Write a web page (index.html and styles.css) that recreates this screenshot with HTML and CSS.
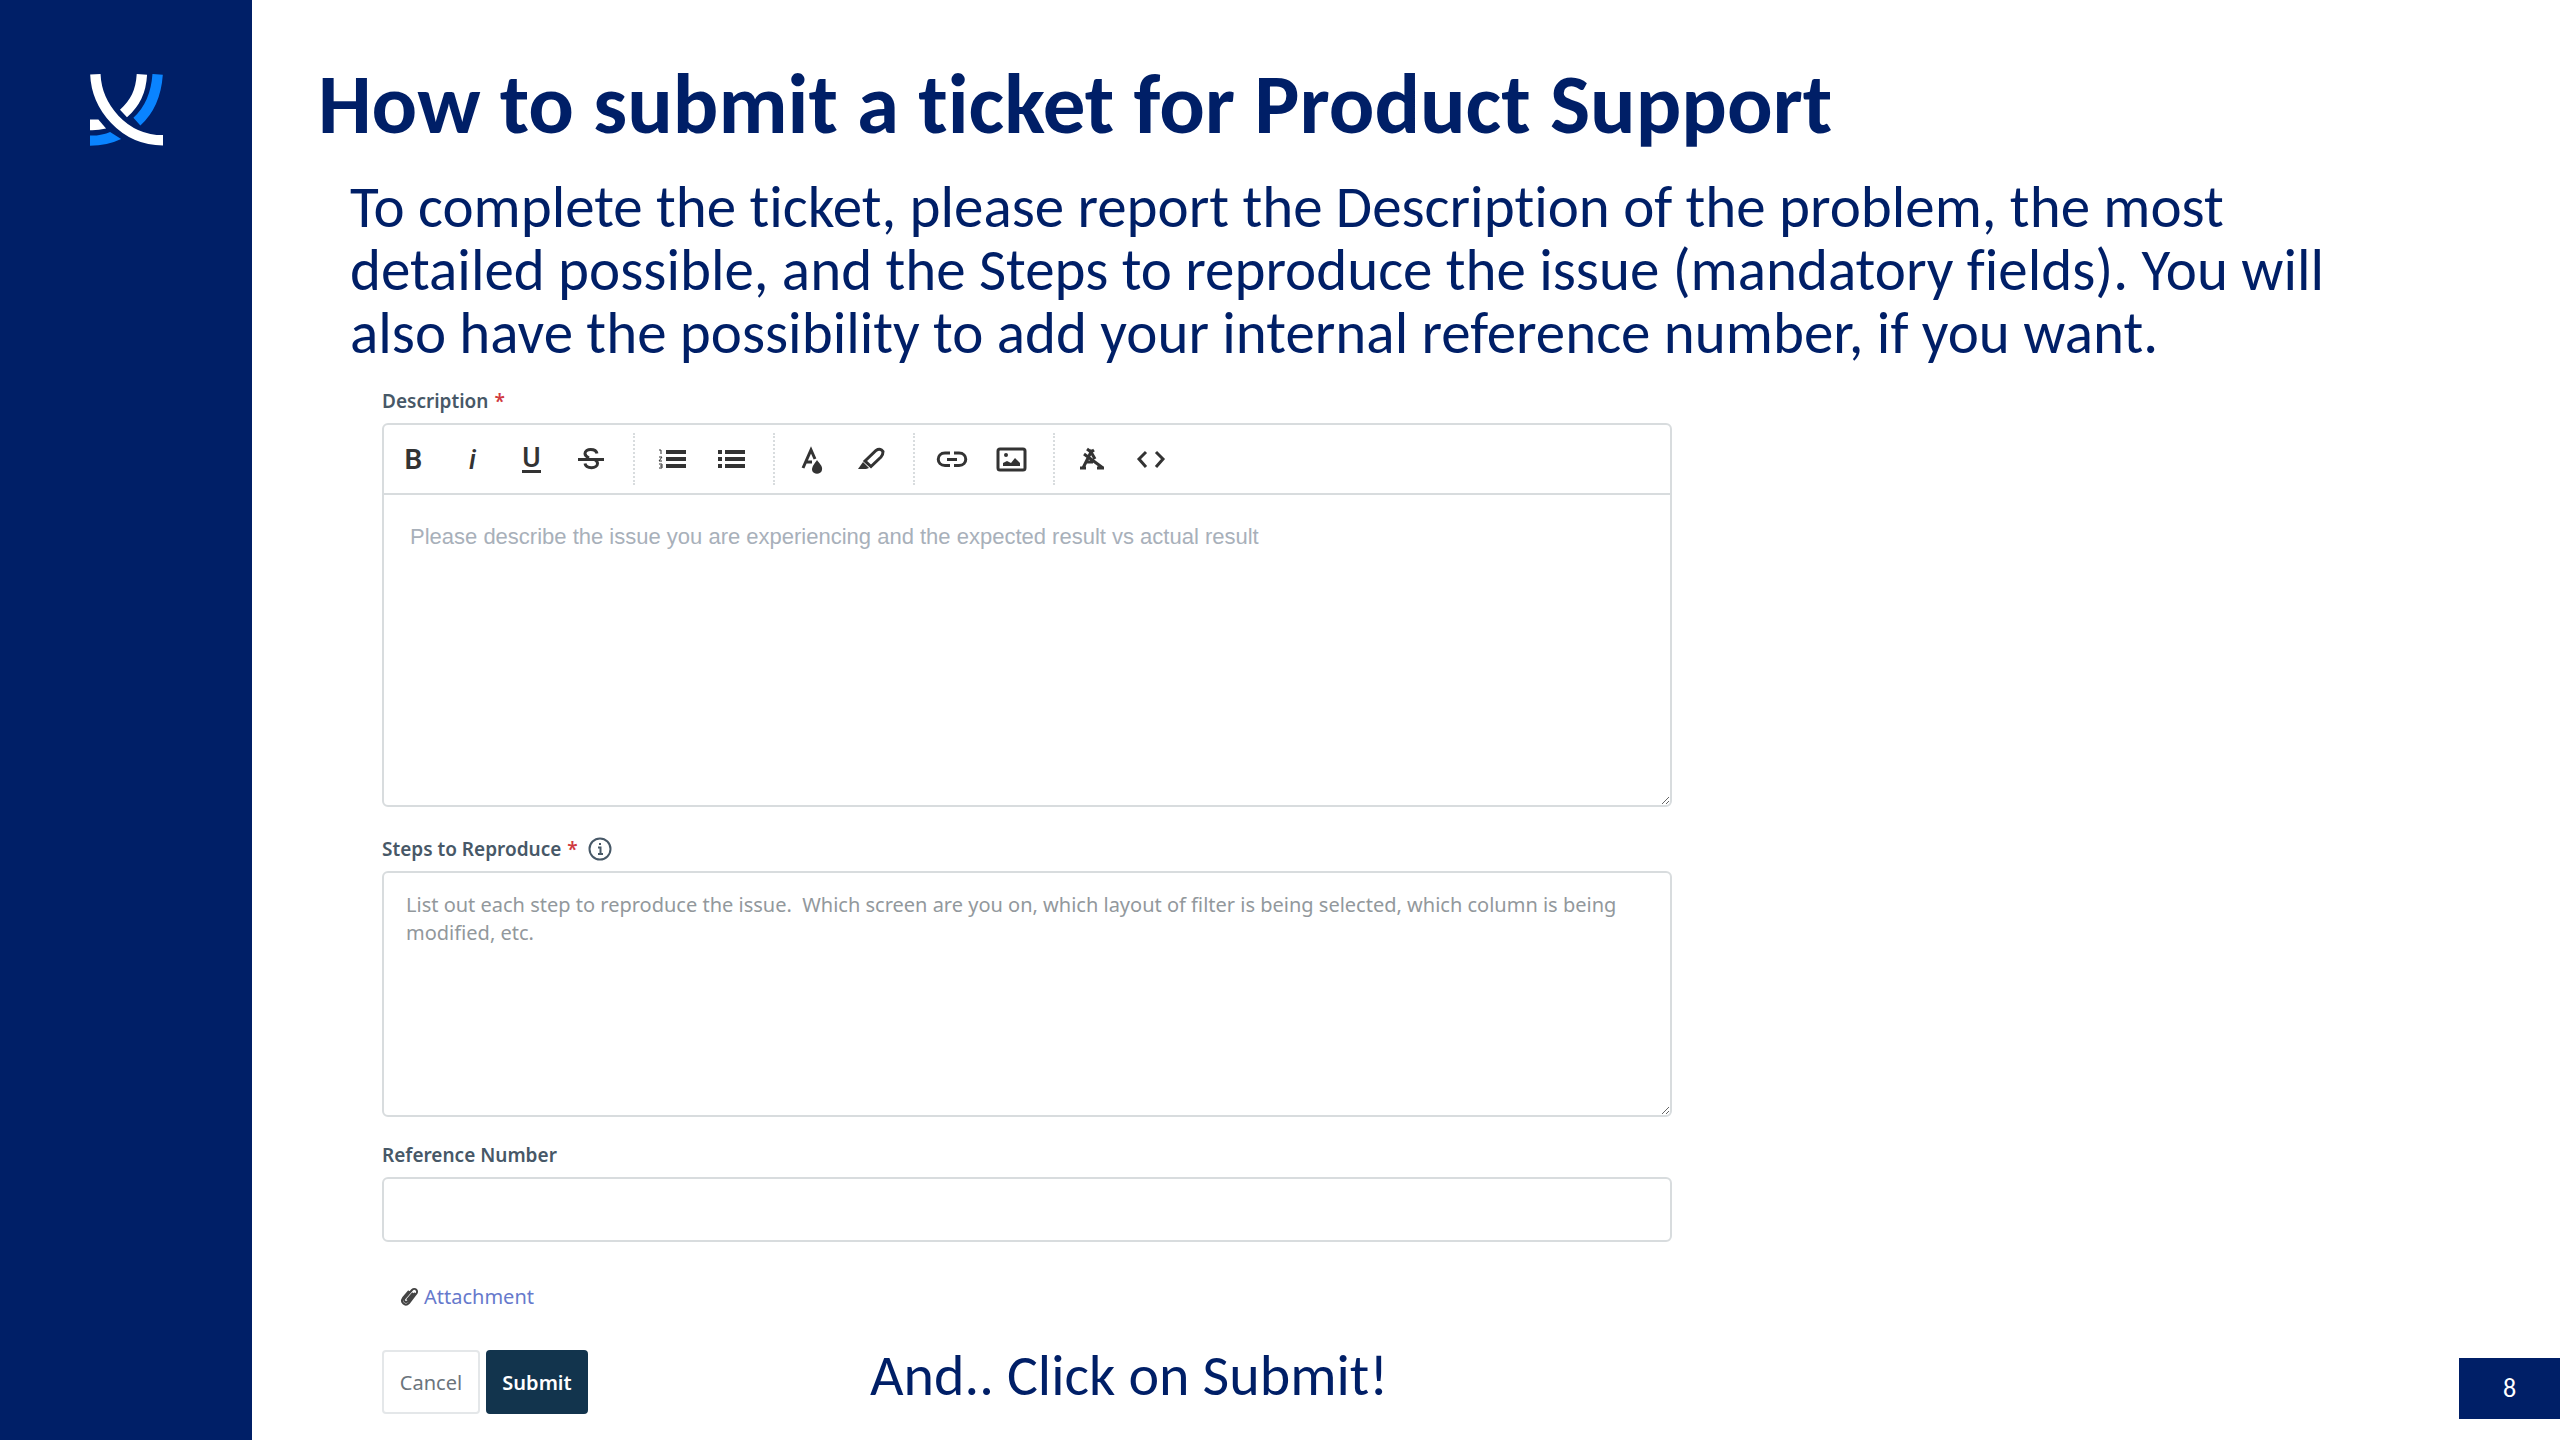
FILE: index.html
```html
<!doctype html>
<html lang="en">

<head>
    <meta charset="utf-8">
    <title>How to submit a ticket for Product Support</title>
    <link rel="stylesheet" href="styles.css">
</head>

<body>

<div class="slide">
    <aside class="sidebar">
        <svg class="logo" viewBox="90 73 218 213" fill="none" stroke-width="31">
            <path d="M245 73C242 125 225 158 190 190" stroke="#fff"/>
            <path d="M292 73C288 130 270 178 230 214" stroke="#0a84ff"/>
            <path d="M90 208H115L138 235Q112 241 90 240Z" fill="#fff" stroke="none"/>
            <path d="M90 256C120 256 135 251 150 245L183 266Q142 286 90 286Z" fill="#0a84ff" stroke="none"/>
            <path d="M106 73C110 170 190 270 308 270" stroke="#fff"/>
        </svg>
    </aside>

    <main class="content">
        <h1 class="title">How to submit a ticket for Product Support</h1>
        <p class="intro">To complete the ticket, please report the Description of the problem, the most<br>
            detailed possible, and the Steps to reproduce the issue (mandatory fields). You will<br>
            also have the possibility to add your internal reference number, if you want.</p>

        <form class="ticket">
            <label class="label" for="description">Description <span class="required">*</span></label>
            <div class="editor">
                <div class="toolbar">
                    <button class="tool" type="button" aria-label="Bold"><b class="tool-bold">B</b></button>
                    <button class="tool" type="button" aria-label="Italic"><i class="tool-italic">i</i></button>
                    <button class="tool" type="button" aria-label="Underline"><span class="tool-underline">U</span></button>
                    <button class="tool" type="button" aria-label="Strikethrough">
                        <svg class="icon" viewBox="0 0 36 36"><path d="M24 12.500C23 7 12 7 12 12.500C12 15 14 16 16 17M12 22.500C13 28 24.500 28 24.500 22.500C24.500 20.500 23 19.500 22 19M5 18.500H31"/></svg>
                    </button>
                    <span class="divider"></span>
                    <button class="tool" type="button" aria-label="Ordered list">
                        <svg class="icon" viewBox="0 0 36 36"><path class="thick" d="M12 11H32M12 18H32M12 25H32"/><path class="thin" d="M5 9H7V13M5 16H8L5 20H8M5 23H8V27H5M6 25H8"/></svg>
                    </button>
                    <button class="tool" type="button" aria-label="Bullet list">
                        <svg class="icon" viewBox="0 0 36 36"><path class="thick" d="M12 11H32M12 18H32M12 25H32M5 11H9M5 18H9M5 25H9"/></svg>
                    </button>
                    <span class="divider"></span>
                    <button class="tool" type="button" aria-label="Text color">
                        <svg class="icon" viewBox="0 0 36 36"><path d="M9 27L17 9L21 18M12 21H18"/><path class="solid" d="M23 19C25 22 29 25 28 29C27 34 19 34 18 29C18 25 21 22 23 19Z"/></svg>
                    </button>
                    <button class="tool" type="button" aria-label="Background color">
                        <svg class="icon" viewBox="0 0 36 36"><path d="M12 20L23 9.500Q26 7.500 28.500 9L30 10.500Q30 14 28 16L18 25.500Z"/><path class="solid" d="M10 21L16 27L13 28H5Z"/></svg>
                    </button>
                    <span class="divider"></span>
                    <button class="tool" type="button" aria-label="Link">
                        <svg class="icon" viewBox="0 0 36 36"><path d="M16 12H11C2 12 2 24.500 11 24.500H16M20 12H25C34 12 34 24.500 25 24.500H20M13 18.500H23"/></svg>
                    </button>
                    <button class="tool" type="button" aria-label="Image">
                        <svg class="icon" viewBox="0 0 36 36"><rect x="5" y="8" width="27" height="21" rx="2"/><path class="solid" d="M10 25V22L14 20L18 22L22 17L27 22V25Z"/><circle class="solid" cx="13" cy="14" r="2"/></svg>
                    </button>
                    <span class="divider"></span>
                    <button class="tool" type="button" aria-label="Clear formatting">
                        <svg class="icon" viewBox="0 0 36 36"><path d="M9 27L17 11L21 18M12 21H19M10 13L29 27M6 27H12M23 27H30M13 8L17 11L20 9"/></svg>
                    </button>
                    <button class="tool" type="button" aria-label="Code view">
                        <svg class="icon" viewBox="0 0 36 36"><path d="M13 11L6 18L13 26M23 11L30 18L23 26"/></svg>
                    </button>
                </div>
                <textarea class="editor-text" id="description" placeholder="Please describe the issue you are experiencing and the expected result vs actual result"></textarea>
            </div>

            <label class="label" for="steps">Steps to Reproduce <span class="required">*</span>
                <svg class="info" viewBox="0 0 24 24"><circle cx="12" cy="12" r="10.500"/><path d="M10 10.500H12.500V17M10 17H15M12 6V8"/></svg>
            </label>
            <textarea class="field steps" id="steps" placeholder="List out each step to reproduce the issue.  Which screen are you on, which layout of filter is being selected, which column is being modified, etc."></textarea>

            <label class="label" for="reference">Reference Number</label>
            <input class="field reference" id="reference" type="text">

            <div class="attachment">
                <svg class="clip" viewBox="0 0 20 22"><path d="M15 8L8 16C5 19 3 15 5 13L12 5C15 2 19 6 16 9L9 18C5 22 0 17 3 13L9 6M13 8L7 15"/></svg>
                <a class="attachment-link" href="#">Attachment</a>
            </div>

            <div class="actions">
                <button class="button" type="button">Cancel</button>
                <button class="button button-submit" type="submit">Submit</button>
                <p class="note">And.. Click on Submit!</p>
            </div>
        </form>
    </main>

    <div class="page-number">8</div>
</div>

</body>

</html>
```

FILE: styles.css
```css
* {
    box-sizing: border-box;
}

body {
    margin: 0;
    background: #fff;
    color: #001f67;
    font-family: Carlito, Lato, sans-serif;
    font-variant-ligatures: none;
}

.slide {
    position: relative;
    display: flex;
    min-height: 100vh;
}

.sidebar {
    flex: 0 0 252px;
    padding: 74px 0 0 90px;
    background: #001f67;
}

.logo {
    display: block;
    width: 73px;
    height: 72px;
}

.content {
    flex: 1;
    padding: 52px 0 0 66px;
}

.title {
    margin: 0;
    font-size: 85px;
    line-height: 104px;
}

.intro {
    margin: 20px 0 0 32px;
    font-size: 59px;
    line-height: 63px;
}

.ticket {
    width: 58%;
    max-width: 1290px;
    margin: 18px 0 0 64px;
    font-family: "Noto Sans", sans-serif;
    font-size: 20px;
}

.label {
    display: flex;
    align-items: center;
    gap: 6px;
    height: 40px;
    padding-bottom: 4px;
    color: #475867;
    font-size: 19px;
    font-weight: 600;
}

.required {
    color: #d03a40;
}

.info {
    width: 24px;
    height: 24px;
    margin-left: 4px;
    fill: none;
    stroke: #475867;
    stroke-width: 2;
}

.editor,
.field {
    display: block;
    width: 100%;
    border: 2px solid #d8dcde;
    border-radius: 6px;
    background: #fff;
}

.editor {
    margin-bottom: 24px;
}

.toolbar {
    display: flex;
    align-items: center;
    height: 70px;
    border-bottom: 2px solid #d8dcde;
}

.tool {
    display: flex;
    align-items: center;
    justify-content: center;
    width: 59px;
    height: 48px;
    padding: 0;
    border: 0;
    background: none;
    color: #333;
    font: 28px Roboto, sans-serif;
}

.tool-bold {
    font-weight: 600;
}

.tool-italic,
.tool-underline {
    font-weight: 500;
}

.tool-underline {
    border-bottom: 3px solid #333;
    line-height: 24px;
}

.icon {
    width: 36px;
    height: 36px;
    fill: none;
    stroke: #333;
    stroke-width: 3;
}

.icon .thick {
    stroke-width: 4;
}

.icon .thin {
    stroke-width: 1;
}

.icon .solid {
    fill: #333;
    stroke: none;
}

.divider {
    height: 52px;
    margin: 0 7px 0 13px;
    border-left: 2px dotted #d8dcde;
}

.editor-text {
    display: block;
    width: 100%;
    height: 310px;
    padding: 28px 26px;
    border: 0;
    background: none;
    font: 22px/28px "Liberation Sans", sans-serif;
}

.editor-text::placeholder {
    color: #a8b0ba;
}

.steps {
    height: 246px;
    margin-bottom: 20px;
    padding: 18px 22px;
    font: 20px/28px "Noto Sans", sans-serif;
}

.steps::placeholder {
    color: #92989c;
}

.reference {
    height: 65px;
}

.attachment {
    display: flex;
    align-items: center;
    gap: 4px;
    height: 28px;
    margin: 40px 0 0 18px;
}

.clip {
    width: 20px;
    height: 22px;
    fill: none;
    stroke: #444;
    stroke-width: 2;
}

.attachment-link {
    color: #6679cc;
    text-decoration: none;
}

.actions {
    display: flex;
    align-items: flex-start;
    gap: 6px;
    margin-top: 40px;
}

.button {
    width: 98px;
    height: 64px;
    padding: 0;
    border: 2px solid #e4e7e9;
    border-radius: 4px;
    background: #fff;
    color: #6b747c;
    font: 20px "Noto Sans", sans-serif;
}

.button-submit {
    width: 102px;
    border-color: #12344d;
    background: #12344d;
    color: #fff;
    font-weight: 600;
}

.note {
    margin: 0 0 0 276px;
    font: 58px/52px Carlito, Lato, sans-serif;
    font-variant-ligatures: none;
}

.page-number {
    position: absolute;
    right: 0;
    bottom: 21px;
    width: 101px;
    background: #001f67;
    color: #fff;
    font-size: 26px;
    line-height: 61px;
    text-align: center;
}
```
